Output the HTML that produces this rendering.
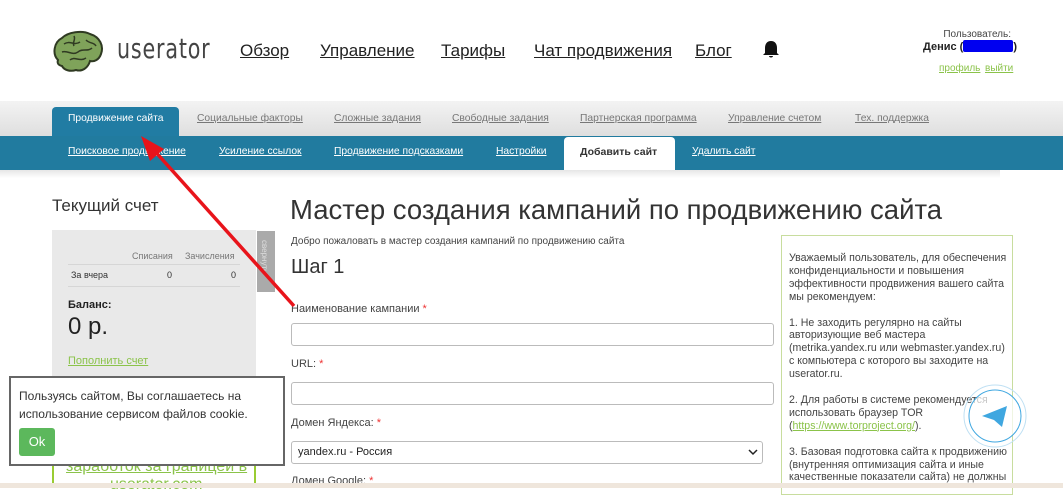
<!DOCTYPE html>
<html><head><meta charset="utf-8"><style>
*{margin:0;padding:0;box-sizing:border-box}
body{width:1063px;height:488px;overflow:hidden;background:#fff;font-family:"Liberation Sans","DejaVu Sans",sans-serif;position:relative;color:#333}
.a{position:absolute;white-space:nowrap}
.nav{font-size:17px;color:#222;text-decoration:underline;top:41px}
.tab{font-size:10.3px;color:#777;text-decoration:underline;top:113px}
.sub{font-size:10.3px;color:#fff;text-decoration:underline;top:146px}
.lbl{font-size:11px;color:#444}
.lbl b{color:#e33;font-weight:normal}
.inp{position:absolute;border:1px solid #bbb;border-radius:3px;background:#fff;height:23px}
</style></head><body>
<svg class="a" style="left:52px;top:30px" width="52" height="44" viewBox="0 0 52 44">
<path d="M6 30 C0 24 2 12 10 8 C16 2 30 0 38 4 C48 7 52 16 49 24 C47 30 42 32 38 31 C36 38 30 42 24 40 C18 42 12 40 10 36 C6 35 5 33 6 30Z" fill="#7fa35a" stroke="#2f3a22" stroke-width="2"/>
<path d="M12 14 C18 10 22 16 28 12 M10 22 C16 20 20 26 26 22 C30 18 36 22 40 18 M18 30 C22 26 28 32 34 28 M34 10 C38 14 42 12 44 16 M22 6 C24 10 20 12 22 16" fill="none" stroke="#2f3a22" stroke-width="1.5"/>
</svg>
<div class="a" style="left:117px;top:32px;font-size:28px;color:#444;letter-spacing:1px;font-family:'DejaVu Sans Condensed','Liberation Sans Narrow',sans-serif;transform:scaleX(0.82);transform-origin:left">userator</div>
<div class="a nav" style="left:240px">Обзор</div>
<div class="a nav" style="left:320px">Управление</div>
<div class="a nav" style="left:441px">Тарифы</div>
<div class="a nav" style="left:534px">Чат продвижения</div>
<div class="a nav" style="left:695px">Блог</div>
<svg class="a" style="left:762px;top:40px" width="18" height="20" viewBox="0 0 18 20"><path d="M9 1 C5 1 3 4 3 8 L3 13 L1 15 L17 15 L15 13 L15 8 C15 4 13 1 9 1Z M7 16 C7 18 11 18 11 16Z" fill="#111"/></svg>
<div class="a" style="right:52px;top:29px;font-size:10px;color:#444">Пользователь:</div>
<div class="a" style="left:923px;top:40px;font-size:11px;font-weight:bold;color:#222">Денис (<span style="display:inline-block;width:50px;height:12px;background:#0000f0;vertical-align:-2px;border-radius:2px"></span>)</div>
<div class="a" style="left:939px;top:63px;font-size:10px;color:#8bc34a;text-decoration:underline">профиль</div>
<div class="a" style="left:985px;top:63px;font-size:10px;color:#8bc34a;text-decoration:underline">выйти</div>
<div class="a" style="left:0;top:101px;width:1063px;height:36px;background:linear-gradient(#f3f3f3,#dedede)"></div>
<div class="a" style="left:52px;top:107px;width:127px;height:30px;background:#217ca3;border-radius:4px 4px 0 0"></div>
<div class="a" style="left:68px;top:113px;font-size:10.3px;color:#fff">Продвижение сайта</div>
<div class="a tab" style="left:197px">Социальные факторы</div>
<div class="a tab" style="left:334px">Сложные задания</div>
<div class="a tab" style="left:452px">Свободные задания</div>
<div class="a tab" style="left:580px">Партнерская программа</div>
<div class="a tab" style="left:728px">Управление счетом</div>
<div class="a tab" style="left:855px">Тех. поддержка</div>
<div class="a" style="left:0;top:136px;width:1063px;height:34px;background:#217b9f"></div>
<div class="a" style="left:0;top:170px;width:1000px;height:8px;background:linear-gradient(#e6e6e6,#fff)"></div>
<div class="a" style="left:564px;top:137px;width:111px;height:33px;background:#fff;border-radius:4px 4px 0 0"></div>
<div class="a sub" style="left:68px">Поисковое продвижение</div>
<div class="a sub" style="left:219px">Усиление ссылок</div>
<div class="a sub" style="left:334px">Продвижение подсказками</div>
<div class="a sub" style="left:496px">Настройки</div>
<div class="a" style="left:580px;top:146px;font-size:10.5px;font-weight:bold;color:#333">Добавить сайт</div>
<div class="a sub" style="left:692px">Удалить сайт</div>
<div class="a" style="left:52px;top:196px;font-size:17px;color:#333">Текущий счет</div>
<div class="a" style="left:52px;top:230px;width:204px;height:160px;background:#e9e9e9"></div>
<div class="a" style="left:257px;top:231px;width:18px;height:61px;background:#aaa"></div>
<div class="a" style="left:260px;top:240px;font-size:8px;color:#ddd;writing-mode:vertical-rl">свернуть</div>
<div class="a" style="left:132px;top:251px;font-size:9px;color:#777">Списания</div>
<div class="a" style="left:185px;top:251px;font-size:9px;color:#777">Зачисления</div>
<div class="a" style="left:68px;top:264px;width:172px;border-top:1px solid #d6d6d6"></div>
<div class="a" style="left:71px;top:270px;font-size:9px;color:#333">За вчера</div>
<div class="a" style="left:167px;top:270px;font-size:9px;color:#333">0</div>
<div class="a" style="left:231px;top:270px;font-size:9px;color:#333">0</div>
<div class="a" style="left:68px;top:286px;width:172px;border-top:1px solid #d6d6d6"></div>
<div class="a" style="left:68px;top:299px;font-size:11px;font-weight:bold;color:#222">Баланс:</div>
<div class="a" style="left:68px;top:313px;font-size:24px;color:#222">0 р.</div>
<div class="a" style="left:68px;top:355px;font-size:11px;color:#8bc34a;text-decoration:underline">Пополнить счет</div>
<div class="a" style="left:52px;top:455px;width:204px;height:33px;border:2px solid #9c3;border-top:none"></div>
<div class="a" style="left:66px;top:458px;font-size:16px;color:#8bc34a;text-decoration:underline">заработок за границей в</div>
<div class="a" style="left:110px;top:476px;font-size:16px;color:#8bc34a">userator.com</div>
<div class="a" style="left:9px;top:376px;width:276px;height:90px;background:#fff;border:2px solid #666"></div>
<div class="a" style="left:19px;top:387px;font-size:12px;color:#333;line-height:18px">Пользуясь сайтом, Вы соглашаетесь на<br>использование сервисом файлов cookie.</div>
<div class="a" style="left:19px;top:428px;width:36px;height:28px;background:#5cb85c;border-radius:3px;color:#fff;font-size:13px;text-align:center;line-height:28px">Ok</div>
<div class="a" style="left:290px;top:194px;font-size:27.5px;color:#333">Мастер создания кампаний по продвижению сайта</div>
<div class="a" style="left:291px;top:236px;font-size:10px;color:#444">Добро пожаловать в мастер создания кампаний по продвижению сайта</div>
<div class="a" style="left:291px;top:256px;font-size:20px;color:#333">Шаг 1</div>
<div class="a lbl" style="left:291px;top:303px">Наименование кампании <b>*</b></div>
<div class="inp" style="left:291px;top:323px;width:483px"></div>
<div class="a lbl" style="left:291px;top:358px">URL: <b>*</b></div>
<div class="inp" style="left:291px;top:382px;width:483px"></div>
<div class="a lbl" style="left:291px;top:417px">Домен Яндекса: <b>*</b></div>
<div class="inp" style="left:291px;top:441px;width:472px"></div>
<div class="a" style="left:298px;top:446px;font-size:11px;color:#222">yandex.ru - Россия</div>
<svg class="a" style="left:748px;top:448px" width="10" height="8"><path d="M1 2 L5 6 L9 2" fill="none" stroke="#222" stroke-width="1.5"/></svg>
<div class="a lbl" style="left:291px;top:475px">Домен Google: <b>*</b></div>
<div class="a" style="left:781px;top:235px;width:232px;height:260px;border:1px solid #c8dd9e"></div>
<div class="a" style="left:789px;top:252px;font-size:10.6px;color:#444;line-height:12.9px">Уважаемый пользователь, для обеспечения<br>конфиденциальности и повышения<br>эффективности продвижения вашего сайта<br>мы рекомендуем:<br><br>1. Не заходить регулярно на сайты<br>авторизующие веб мастера<br>(metrika.yandex.ru или webmaster.yandex.ru)<br>с компьютера с которого вы заходите на<br>userator.ru.<br><br>2. Для работы в системе рекомендуется<br>использовать браузер TOR<br>(<span style="color:#8bc34a;text-decoration:underline">https://www.torproject.org/</span>).<br><br>3. Базовая подготовка сайта к продвижению<br>(внутренняя оптимизация сайта и иные<br>качественные показатели сайта) не должны</div>
<svg class="a" style="left:962px;top:383px" width="66" height="66" viewBox="0 0 66 66"><circle cx="33" cy="33" r="31" fill="none" stroke="#bfe0f3" stroke-width="1"/><circle cx="33" cy="33" r="26" fill="rgba(255,255,255,.7)" stroke="#3fa7e0" stroke-width="1"/><path d="M20 33 L45 23 L40 44 L32 37 Z" fill="#3fa7e0"/></svg>
<div class="a" style="left:0;top:483px;width:1063px;height:5px;background:#efe6dc"></div>
<svg class="a" style="left:0;top:0" width="1063" height="488"><line x1="294" y1="306" x2="152" y2="148" stroke="#e8141b" stroke-width="3.5"/><path d="M141 136 L164 149 L150 161 Z" fill="#e8141b"/></svg>
</body></html>
